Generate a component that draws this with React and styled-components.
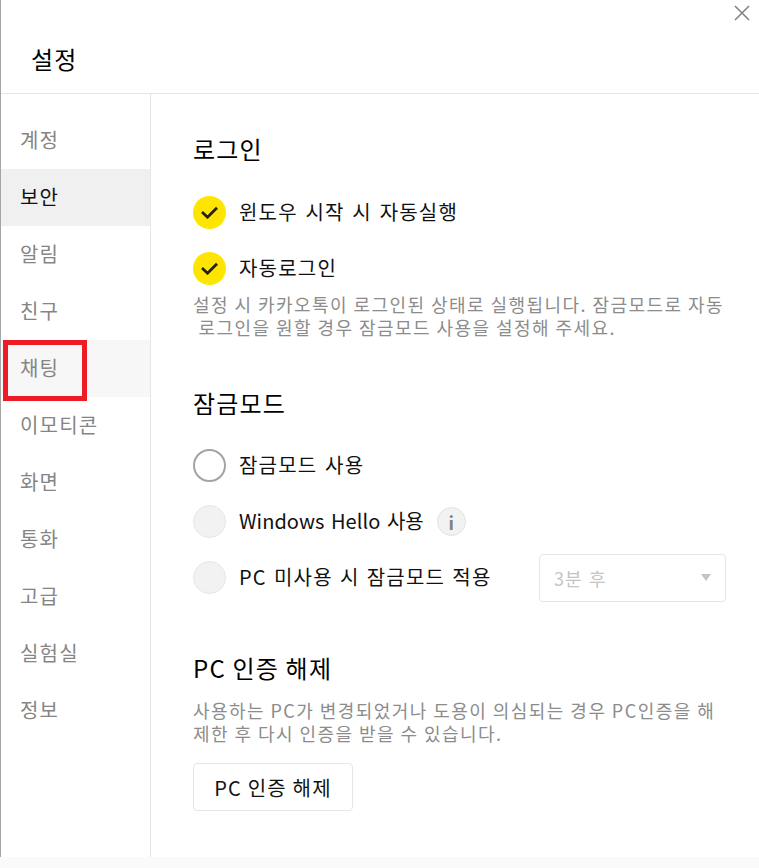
import styled, { createGlobalStyle } from 'styled-components'

const GlobalStyle = createGlobalStyle`
  html, body {
    margin: 0;
    padding: 0;
    background: #fafafa;
  }
  * {
    box-sizing: border-box;
  }
`

const Window = styled.div`
  position: relative;
  width: 759px;
  height: 857px;
  background: white;
  border-left: 1px solid #a8a4a4;
  font-family: "Noto Sans CJK KR", "Noto Sans", sans-serif;
  color: #111;
  overflow: hidden;
`

const Header = styled.header`
  height: 94px;
  border-bottom: 1px solid #e6e6e6;
  padding: 41px 0 0 30px;
  font-size: 24px;
  line-height: 36px;
  letter-spacing: 1.2px;
  font-weight: 400;
  color: #000;
`

const CloseButton = styled.button`
  position: absolute;
  top: 5px;
  right: 9px;
  width: 16px;
  height: 16px;
  padding: 0;
  border: 0;
  background: none;
  color: #808080;
  display: flex;
`

const Body = styled.div`
  display: flex;
  height: 763px;
`

const Sidebar = styled.nav`
  position: relative;
  width: 150px;
  border-right: 1px solid #e6e6e6;
  padding-top: 18px;
  flex-shrink: 0;
`

const NavItem = styled.div`
  height: 57px;
  padding-left: 19px;
  font-size: 20px;
  line-height: 55px;
  letter-spacing: 1.2px;
  color: ${(p) => (p.$active ? '#111' : '#858585')};
  background: ${(p) => (p.$active ? '#f0f0f0' : p.$hover ? '#f7f7f7' : 'transparent')};
`

const Highlight = styled.div`
  position: absolute;
  left: 2px;
  top: 246px;
  width: 84px;
  height: 61px;
  border: 5px solid #ed1c24;
`

const Content = styled.main`
  flex: 1;
  padding: 35px 0 0 42px;
`

const Section = styled.section`
  margin-bottom: ${(p) => p.$gap || 0}px;
`

const Title = styled.h2`
  margin: 0 0 ${(p) => p.$bottom ?? 27}px;
  font-size: 24px;
  line-height: 40px;
  letter-spacing: 1.2px;
  font-weight: 400;
  color: #000;
`

const Row = styled.div`
  display: flex;
  align-items: center;
  height: 33px;
  margin-bottom: ${(p) => (p.$flush ? 0 : 23)}px;
  font-size: 20px;
  letter-spacing: ${(p) => (p.$latin ? 0.05 : 1.2)}px;
  word-spacing: ${(p) => (p.$wide ? 1.5 : 2)}px;
  color: #111;
`

const Label = styled.span`
  padding-bottom: 3px;
`

const Radio = styled.span`
  width: 33px;
  height: 33px;
  border-radius: 50%;
  margin-right: 13px;
  flex-shrink: 0;
  display: flex;
  align-items: center;
  justify-content: center;
  background: ${(p) => (p.$checked ? '#fee500' : p.$disabled ? '#f2f2f2' : 'white')};
  border: ${(p) => (p.$checked ? '0' : p.$disabled ? '1px solid #e6e6e6' : '2px solid #a3a3a3')};
`

const Note = styled.p`
  margin: ${(p) => p.$top || 0}px 0 0;
  font-size: 18px;
  line-height: 23px;
  letter-spacing: 1.45px;
  white-space: nowrap;
  color: #8c8c8c;
`

const InfoBadge = styled.span`
  width: 29px;
  height: 29px;
  margin-left: 13px;
  border-radius: 50%;
  background: #f2f2f2;
  border: 1px solid #e2e2e2;
  color: #808080;
  font-size: 18px;
  font-weight: 700;
  letter-spacing: 0;
  display: flex;
  align-items: center;
  justify-content: center;
`

const Select = styled.div`
  width: 187px;
  height: 48px;
  margin-left: auto;
  margin-right: 33px;
  padding: 0 14px;
  border: 1px solid #e6e6e6;
  border-radius: 4px;
  display: flex;
  align-items: center;
  justify-content: space-between;
  color: #c4c4c4;
  font-size: 18px;
  letter-spacing: 1px;
`

const Arrow = styled.span`
  width: 0;
  height: 0;
  border-left: 5.5px solid transparent;
  border-right: 5.5px solid transparent;
  border-top: 7px solid #c4c4c4;
`

const Button = styled.button`
  display: block;
  width: 160px;
  height: 48px;
  margin-top: 18px;
  background: white;
  border: 1px solid #e6e6e6;
  border-radius: 4px;
  font-family: inherit;
  font-size: 20px;
  letter-spacing: 1.2px;
  color: #111;
`

const navItems = ['계정', '보안', '알림', '친구', '채팅', '이모티콘', '화면', '통화', '고급', '실험실', '정보']

function Check() {
  return (
    <svg width="17" height="13" viewBox="0 0 17 13" fill="none">
      <path d="M1 6 L6.5 11.2 L16 1.8" stroke="#222" strokeWidth="2.8" />
    </svg>
  )
}

export default function App() {
  return (
    <>
      <GlobalStyle />
      <Window>
        <Header>설정</Header>
        <CloseButton>
          <svg width="16" height="16" viewBox="0 0 16 16" fill="none">
            <path d="M1 1 L15 15 M15 1 L1 15" stroke="currentColor" strokeWidth="1.5" />
          </svg>
        </CloseButton>
        <Body>
          <Sidebar>
            {navItems.map((item) => (
              <NavItem key={item} $active={item === '보안'} $hover={item === '채팅'}>
                {item}
              </NavItem>
            ))}
            <Highlight />
          </Sidebar>
          <Content>
            <Section $gap={44}>
              <Title>로그인</Title>
              <Row>
                <Radio $checked><Check /></Radio>
                <Label>윈도우 시작 시 자동실행</Label>
              </Row>
              <Row $flush>
                <Radio $checked><Check /></Radio>
                <Label>자동로그인</Label>
              </Row>
              <Note $top={8}>
                설정 시 카카오톡이 로그인된 상태로 실행됩니다. 잠금모드로 자동
                <br />
                &nbsp;로그인을 원할 경우 잠금모드 사용을 설정해 주세요.
              </Note>
            </Section>
            <Section $gap={54}>
              <Title $bottom={26}>잠금모드</Title>
              <Row>
                <Radio />
                <Label>잠금모드 사용</Label>
              </Row>
              <Row $latin>
                <Radio $disabled />
                <Label>Windows Hello 사용</Label>
                <InfoBadge>i</InfoBadge>
              </Row>
              <Row $flush $wide>
                <Radio $disabled />
                <Label>PC 미사용 시 잠금모드 적용</Label>
                <Select>
                  3분 후
                  <Arrow />
                </Select>
              </Row>
            </Section>
            <Section>
              <Title $bottom={11}>PC 인증 해제</Title>
              <Note>
                사용하는 PC가 변경되었거나 도용이 의심되는 경우 PC인증을 해
                <br />
                제한 후 다시 인증을 받을 수 있습니다.
              </Note>
              <Button>PC 인증 해제</Button>
            </Section>
          </Content>
        </Body>
      </Window>
    </>
  )
}
